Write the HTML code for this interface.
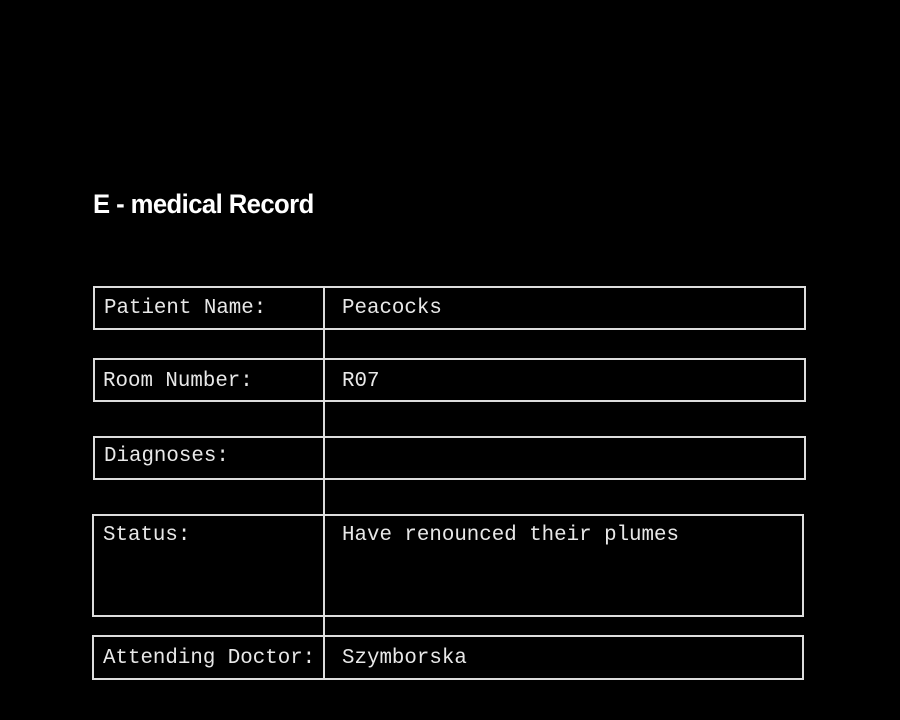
<!DOCTYPE html>
<html><head><style>
html,body{margin:0;padding:0;background:#000;width:900px;height:720px;overflow:hidden;position:relative}
.t{position:absolute;left:93px;top:189px;font:bold 27px "Liberation Sans",sans-serif;color:#fff;letter-spacing:-0.6px;transform:scaleX(0.95);transform-origin:left top}
.b{position:absolute;border:2px solid #ddd;box-sizing:border-box}
.v{position:absolute;left:323px;top:286px;width:2px;height:393px;background:#ddd}
.x{position:absolute;font:20.8px "Liberation Mono",monospace;color:#e8e8e8;line-height:24px;white-space:pre}
</style></head><body>
<div class="t">E - medical Record</div>
<div class="b" style="left:93px;top:286px;width:713px;height:44px"></div>
<div class="b" style="left:93px;top:358px;width:713px;height:44px"></div>
<div class="b" style="left:93px;top:436px;width:713px;height:44px"></div>
<div class="b" style="left:92px;top:514px;width:712px;height:103px"></div>
<div class="b" style="left:92px;top:635px;width:712px;height:45px"></div>
<div class="v"></div>
<div class="x" style="left:104px;top:297px">Patient Name:</div>
<div class="x" style="left:342px;top:297px">Peacocks</div>
<div class="x" style="left:103px;top:370px">Room Number:</div>
<div class="x" style="left:342px;top:370px">R07</div>
<div class="x" style="left:104px;top:445px">Diagnoses:</div>
<div class="x" style="left:103px;top:524px">Status:</div>
<div class="x" style="left:342px;top:524px">Have renounced their plumes</div>
<div class="x" style="left:103px;top:647px">Attending Doctor:</div>
<div class="x" style="left:342px;top:647px">Szymborska</div>
</body></html>
